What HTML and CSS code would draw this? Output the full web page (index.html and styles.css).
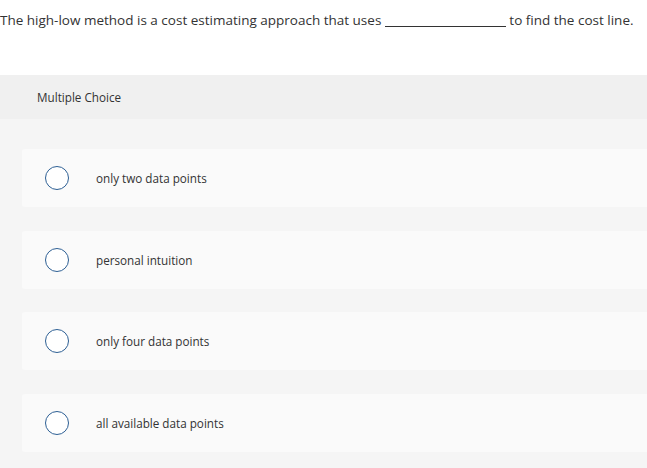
FILE: index.html
```html
<!DOCTYPE html>
<html>
<head>
<meta charset="utf-8">
<link rel="stylesheet" href="styles.css">
</head>
<body>
<div class="page">
  <p class="question">The high-low method is a cost estimating approach that uses <span class="blank"></span> to find the cost line.</p>
  <div class="mc-header">Multiple Choice</div>
  <div class="choices">
    <div class="choice"><span class="radio"></span><span class="label">only two data points</span></div>
    <div class="choice"><span class="radio"></span><span class="label">personal intuition</span></div>
    <div class="choice"><span class="radio"></span><span class="label">only four data points</span></div>
    <div class="choice"><span class="radio"></span><span class="label">all available data points</span></div>
  </div>
</div>
</body>
</html>
```
FILE: styles.css
```css
html, body {
  margin: 0;
  padding: 0;
  background: #f5f5f5;
}
.page {
  width: 647px;
  height: 468px;
  overflow: hidden;
  font-family: "Open Sans", "Liberation Sans", sans-serif;
  color: #333;
}
.question {
  margin: 0;
  height: 75px;
  box-sizing: border-box;
  padding-top: 11px;
  background: #fff;
  font-size: 13.5px;
  line-height: 18px;
  color: #333;
}
.blank {
  display: inline-block;
  width: 121px;
  border-bottom: 1px solid #333;
  vertical-align: -2px;
}
.mc-header {
  height: 44px;
  box-sizing: border-box;
  padding: 15px 0 0 37px;
  background: #f0f0f0;
  font-size: 11.7px;
  line-height: 14px;
  color: #333;
}
.choices {
  display: flex;
  flex-direction: column;
  gap: 23.7px;
  padding: 30px 0 0 22px;
}
.choice {
  height: 58px;
  background: #fafafa;
  border-radius: 3px 0 0 3px;
  display: flex;
  align-items: center;
  padding-left: 23px;
}
.radio {
  width: 22px;
  height: 22px;
  border: 1.5px solid #2d5f94;
  border-radius: 50%;
  background: #fff;
  flex: none;
}
.label {
  margin-left: 27px;
  font-size: 11.7px;
  color: #333;
}
```
